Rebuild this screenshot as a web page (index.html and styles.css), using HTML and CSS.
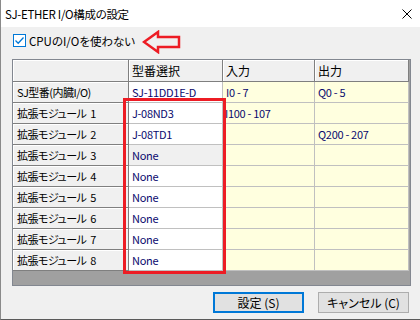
FILE: index.html
```html
<!DOCTYPE html>
<html lang="ja">
<head>
    <meta charset="UTF-8">
    <title>SJ-ETHER I/O構成の設定</title>
    <link rel="stylesheet" href="styles.css">
</head>
<body>
<div class="window">
    <div class="titlebar">
        <span class="title">SJ-ETHER I/O構成の設定</span>
        <svg class="close" width="10" height="10" viewBox="0 0 10 10">
            <path d="M0.5 0.5 L9.5 9.5 M9.5 0.5 L0.5 9.5" stroke="#000" stroke-width="1" fill="none"/>
        </svg>
    </div>
    <div class="content">
        <div class="option">
            <span class="check">
                <svg width="11" height="11" viewBox="0 0 11 11">
                    <path d="M1.5 5.5 L4.2 8.2 L9.5 2.5" stroke="#0078d7" stroke-width="1.3" fill="none"/>
                </svg>
            </span>
            <span class="label">CPUのI/Oを使わない</span>
            <svg class="arrow" width="40" height="24" viewBox="0 0 40 24">
                <path d="M2 12 L16 2 L16 7 L37 7 L37 17 L16 17 L16 22 Z" stroke="#ed1c24" stroke-width="2.5" fill="none" stroke-linejoin="miter"/>
            </svg>
        </div>

        <div class="grid-wrap">
            <div class="grid">
                <div class="hd"></div>
                <div class="hd">型番選択</div>
                <div class="hd">入力</div>
                <div class="hd">出力</div>

                <div class="rh">SJ型番(内臓I/O)</div>
                <div class="cell model">SJ-11DD1E-D</div>
                <div class="cell io">I0 - 7</div>
                <div class="cell io">Q0 - 5</div>

                <div class="rh">拡張モジュール 1</div>
                <div class="cell model">J-08ND3</div>
                <div class="cell io tight">I100 - 107</div>
                <div class="cell io"></div>

                <div class="rh">拡張モジュール 2</div>
                <div class="cell model">J-08TD1</div>
                <div class="cell io"></div>
                <div class="cell io">Q200 - 207</div>

                <div class="rh">拡張モジュール 3</div>
                <div class="cell model current">None</div>
                <div class="cell io"></div>
                <div class="cell io"></div>

                <div class="rh">拡張モジュール 4</div>
                <div class="cell model">None</div>
                <div class="cell io"></div>
                <div class="cell io"></div>

                <div class="rh">拡張モジュール 5</div>
                <div class="cell model">None</div>
                <div class="cell io"></div>
                <div class="cell io"></div>

                <div class="rh">拡張モジュール 6</div>
                <div class="cell model">None</div>
                <div class="cell io"></div>
                <div class="cell io"></div>

                <div class="rh">拡張モジュール 7</div>
                <div class="cell model">None</div>
                <div class="cell io"></div>
                <div class="cell io"></div>

                <div class="rh">拡張モジュール 8</div>
                <div class="cell model">None</div>
                <div class="cell io"></div>
                <div class="cell io"></div>
            </div>
            <div class="highlight"></div>
        </div>

        <div class="buttons">
            <button class="btn default">設定 (S)</button>
            <button class="btn">キャンセル (C)</button>
        </div>
    </div>
</div>
</body>
</html>
```

FILE: styles.css
```css
*{
    margin: 0;
    padding: 0;
    box-sizing: border-box;
}
body{
    width: 420px;
    height: 320px;
    background-color: #f0f0f0;
    font-family: "Noto Sans CJK JP", sans-serif;
    font-size: 11px;
    font-feature-settings: "palt";
    color: #000;
}
.window{
    width: 420px;
    height: 320px;
    border-left: 1px solid #8a8a8a;
    border-bottom: 1px solid #5a5a5a;
    display: flex;
    flex-direction: column;
}
.titlebar{
    height: 27px;
    background-color: #fff;
    display: flex;
    align-items: center;
    justify-content: space-between;
    padding: 0 8px 0 4px;
}
.title{
    font-size: 11.5px;
    letter-spacing: -0.3px;
}
.content{
    flex: 1;
    background-color: #f0f0f0;
    padding-top: 7px;
}
.option{
    height: 13px;
    display: flex;
    align-items: center;
    padding-left: 12px;
}
.check{
    width: 13px;
    height: 13px;
    border: 1px solid #0078d7;
    background-color: #fff;
    display: flex;
}
.label{
    width: 116px;
    padding-left: 3px;
    font-size: 11.5px;
}
.arrow{
    margin-top: 3px;
}
.grid-wrap{
    position: relative;
    width: 399px;
    height: 227px;
    margin: 12px 0 0 11px;
    border: 1px solid #828790;
    background-color: #a0a0a0;
}
.grid{
    display: grid;
    grid-template-columns: 116px 94px 92px 94px;
    grid-template-rows: 22px repeat(9, 21px);
}
.grid > div{
    display: flex;
    align-items: center;
    white-space: nowrap;
    overflow: hidden;
    padding-left: 3px;
    letter-spacing: -0.3px;
}
.hd, .rh{
    background-color: #f0f0f0;
    border-right: 1px solid #7f7f7f;
    border-bottom: 1px solid #7f7f7f;
    box-shadow: inset 1px 1px 0 #fff;
}
.grid > .hd{
    font-size: 12px;
    letter-spacing: 0;
}
.grid > .rh{
    padding-left: 4px;
    letter-spacing: -0.5px;
    word-spacing: 2px;
}
.cell{
    border-right: 1px solid #c0c0c0;
    border-bottom: 1px solid #c0c0c0;
    color: #0a0a6e;
}
.model{
    background-color: #fff;
}
.model.current{
    background-color: #f0f0f0;
}
.io{
    background-color: #ffffdf;
}
.grid > .tight{
    padding-left: 2px;
}
.highlight{
    position: absolute;
    left: 110px;
    top: 38px;
    width: 103px;
    height: 176px;
    border: 3px solid #ed1c24;
}
.buttons{
    display: flex;
    justify-content: flex-end;
    gap: 14px;
    margin-top: 6px;
    padding-right: 11px;
}
.btn{
    width: 91px;
    height: 21px;
    background-color: #e1e1e1;
    border: 1px solid #adadad;
    font-family: "Noto Sans CJK JP", sans-serif;
    font-size: 12px;
    font-feature-settings: "palt";
    color: #000;
}
.btn.default{
    border: 2px solid #0078d7;
}
```
